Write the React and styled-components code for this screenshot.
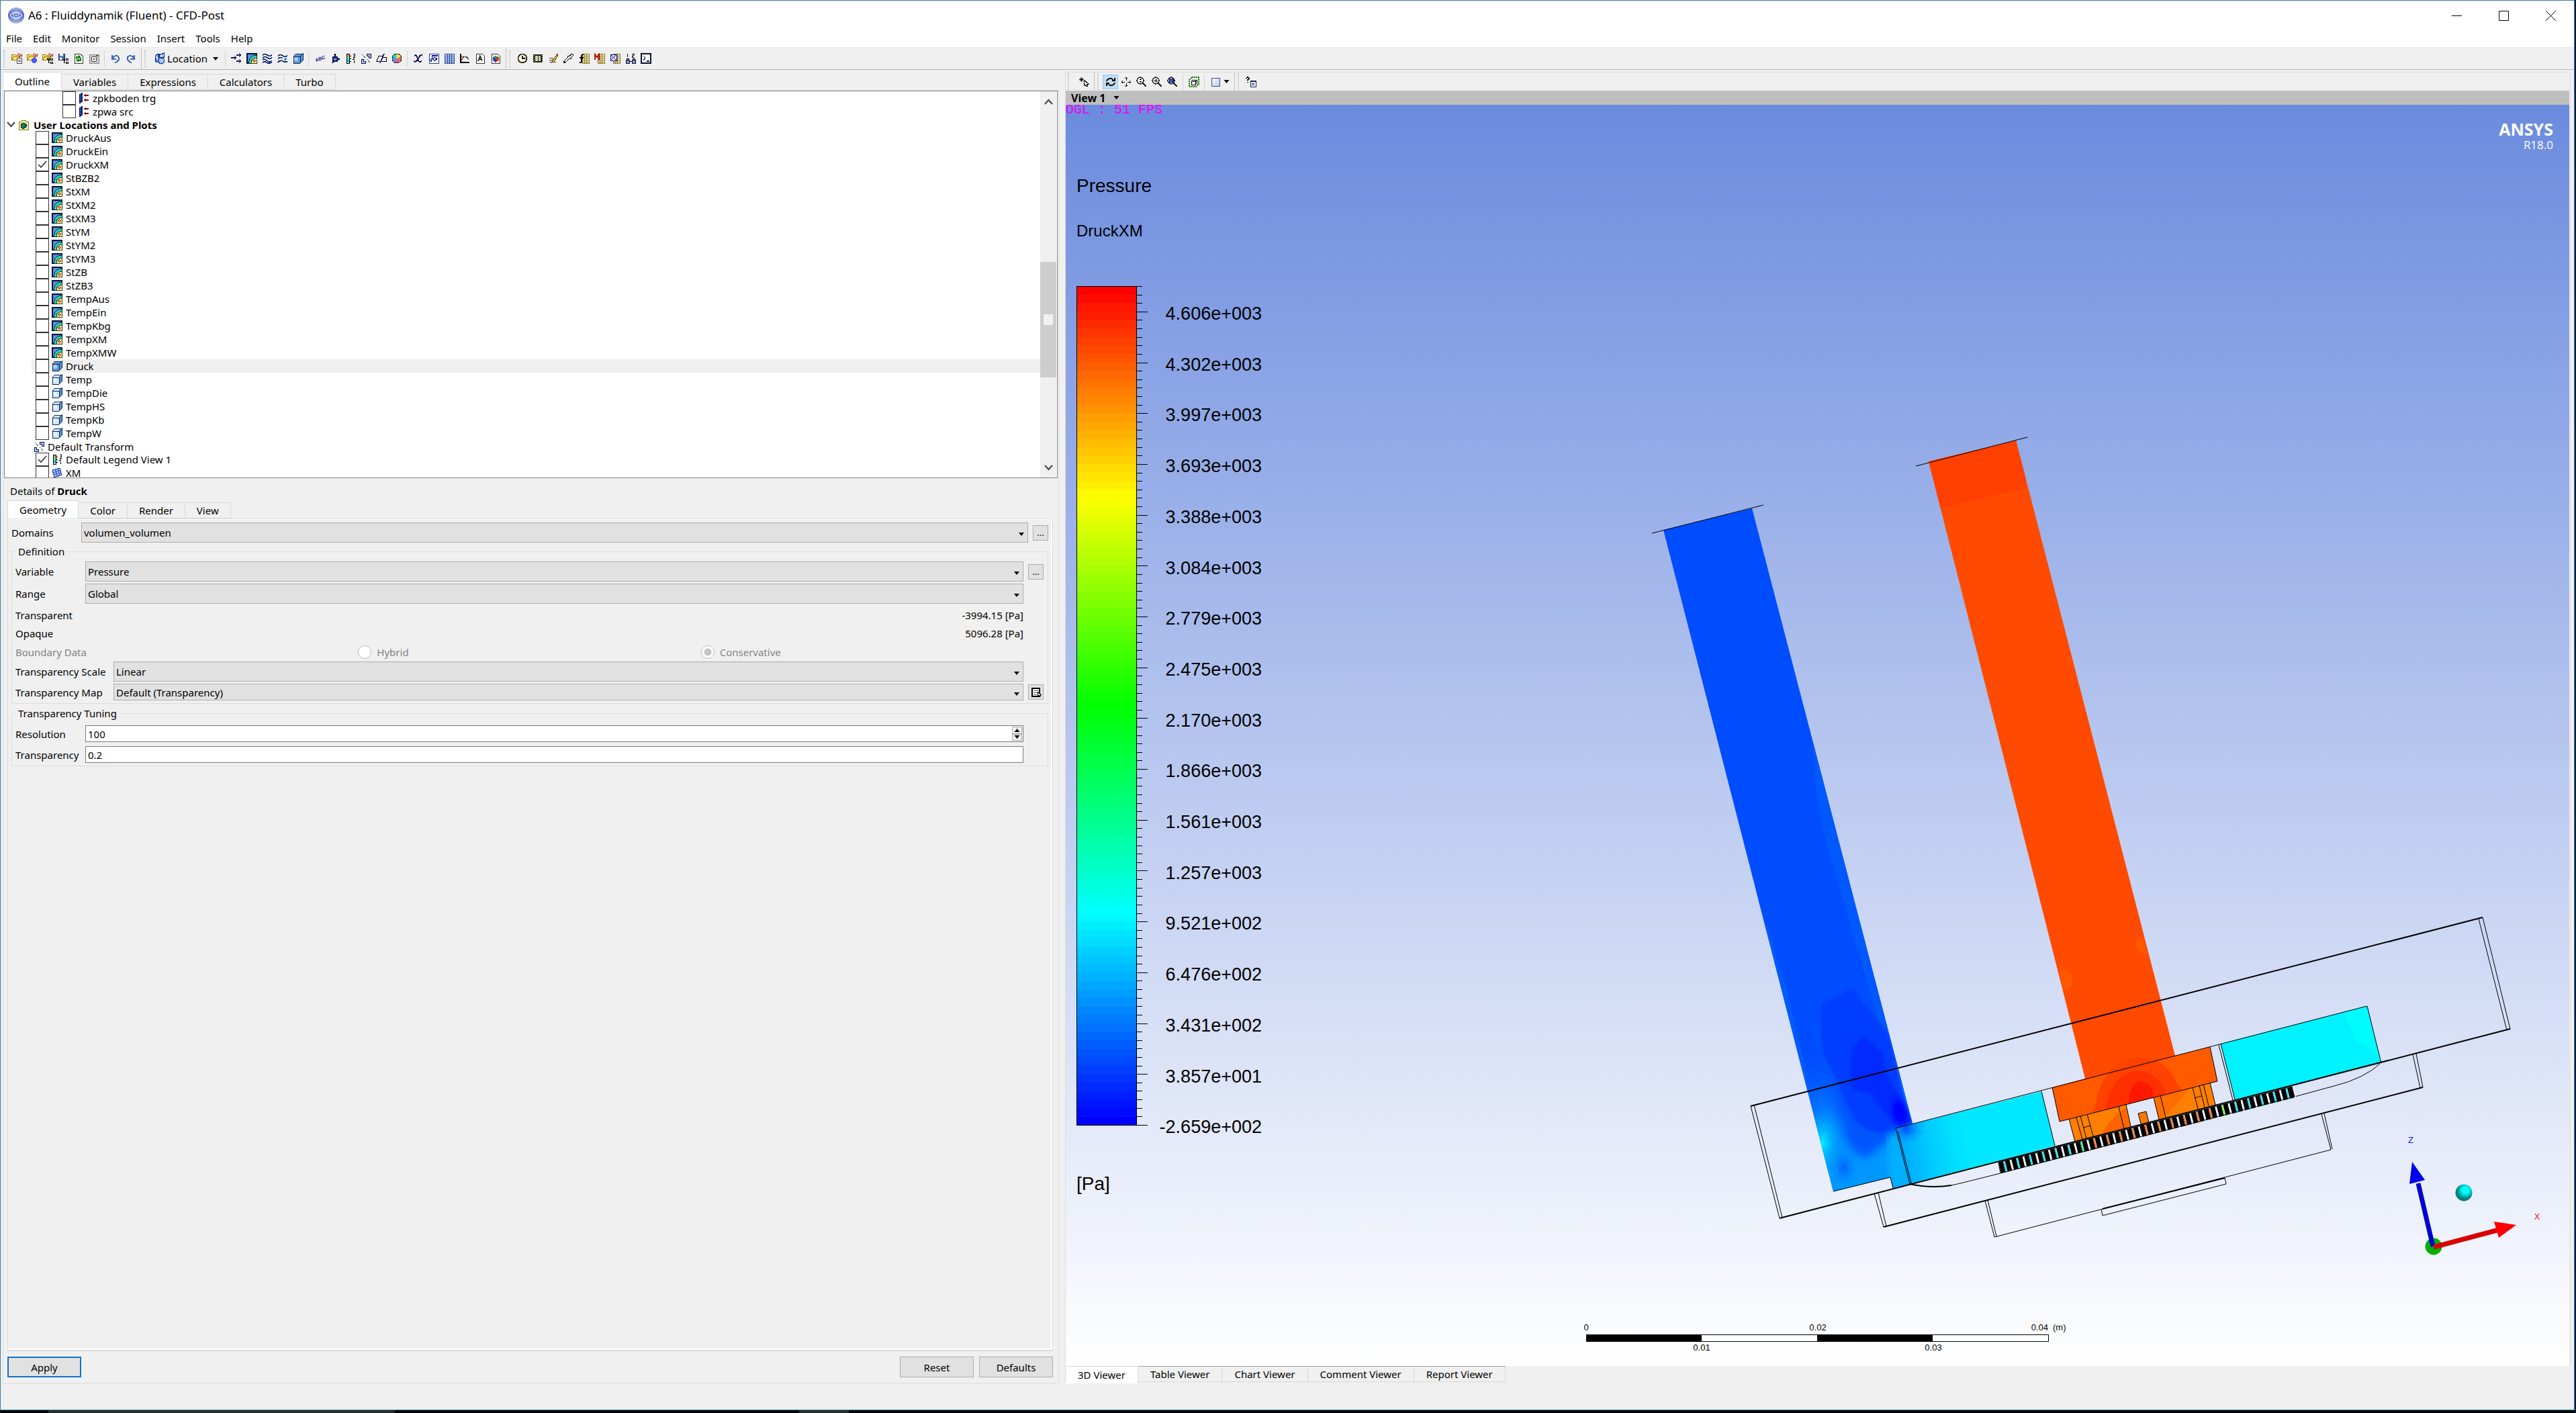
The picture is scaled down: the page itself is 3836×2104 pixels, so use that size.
import React from 'react'
import styled, { createGlobalStyle } from 'styled-components'

const GlobalStyle = createGlobalStyle`
  * { box-sizing: border-box; }
  body {
    margin: 0;
    background: #000;
    color: #000;
    font-family: "Noto Sans", "Open Sans", sans-serif;
    font-size: 15px;
    line-height: 20px;
  }
  button, input, select { font: inherit; color: inherit; }
  svg { display: block; }
`;

/* ---------- window ---------- */

const Desktop = styled.div`
  min-height: 100vh;
  display: flex;
  flex-direction: column;
  background: #0b1c33;
  padding-right: 2px;
`;

const Window = styled.div`
  flex: 1;
  display: flex;
  flex-direction: column;
  background: #f0f0f0;
  border: 1px solid #3c78a8;
  border-bottom-color: #4a7c94;
`;

const TitleBar = styled.header`
  display: flex;
  align-items: center;
  height: 44px;
  padding-left: 11px;
  background: #fff;
`;

const Title = styled.h1`
  flex: 1;
  margin: 0 0 0 6px;
  font-size: 17px;
  font-weight: 400;
`;

const WindowButton = styled.button`
  width: 70px;
  height: 42px;
  display: flex;
  align-items: center;
  justify-content: center;
  border: 0;
  padding: 0;
  background: none;
`;

const MenuBar = styled.nav`
  display: flex;
  gap: 16px;
  height: 26px;
  padding-left: 8px;
  background: #fff;
  border-bottom: 1px solid #e8e8e8;
`;

const MenuLink = styled.a`
  color: #000;
  text-decoration: none;
  line-height: 24px;
`;

/* ---------- toolbars ---------- */

const ToolBar = styled.div`
  display: flex;
  align-items: center;
  height: ${p => (p.$small ? 27 : 33)}px;
  padding-left: ${p => (p.$small ? 3 : 4)}px;
  border-bottom: ${p => (p.$small ? 0 : 1)}px solid #b4b4b4;
`;

const Grip = styled.span`
  width: 8px;
  height: 25px;
  border-left: 2px dotted #c4c4c4;
`;

const Spacer = styled.span`
  width: 4px;
`;

const Divider = styled.span`
  width: 1px;
  height: ${p => (p.$full ? '100%' : '24px')};
  margin: 0 4px;
  background: ${p => (p.$full ? '#c0c0c0' : '#d4d4d4')};
`;

const ToolButton = styled.button`
  width: ${p => p.$width || 23}px;
  height: 22px;
  display: flex;
  align-items: center;
  justify-content: center;
  gap: ${p => (p.$width > 100 ? 8 : 4)}px;
  padding: 0;
  border: 1px solid ${p => (p.$active ? '#90c8f6' : 'transparent')};
  background: ${p => (p.$active ? '#c0dcf3' : 'none')};
`;

const ToolText = styled.span`
  margin-left: -6px;
`;

/* ---------- panes ---------- */

const Body = styled.main`
  flex: 1;
  display: grid;
  grid-template-columns: 1573fr 2242fr;
  gap: 9px;
  padding: 3px 5px 0 3px;
`;

const Column = styled.section`
  display: flex;
  flex-direction: column;
  min-width: 0;
`;

const Tabs = styled.div`
  display: flex;
  align-items: ${p => (p.$bottom ? 'flex-start' : 'flex-end')};
  height: ${p => (p.$bottom ? 26 : 27)}px;
`;

const Tab = styled.button`
  height: ${p => (p.$active ? '100%' : '24px')};
  padding: 0 ${p => (p.$bottom ? 18 : 17)}px;
  border: 1px solid #d9d9d9;
  border-left-width: ${p => (p.$active ? 1 : 0)}px;
  border-top-color: ${p => (p.$bottom && !p.$active ? '#a0a0a0' : '#d9d9d9')};
  border-bottom-color: ${p => (p.$active ? '#fff' : '#d9d9d9')};
  background: ${p => (p.$active ? '#fff' : '#f0f0f0')};
  line-height: 20px;
`;

const Pane = styled.div`
  flex: 1;
  display: flex;
  flex-direction: column;
  padding: 0 1px 8px 1px;
  border: 1px solid #dcdcdc;
`;

const TreeBox = styled.div`
  display: flex;
  height: 577px;
  overflow: hidden;
  background: #fff;
  border: 1px solid #828282;
`;

const TreeList = styled.ul`
  flex: 1;
  margin: 0;
  padding: 0;
  list-style: none;
`;

const TreeRow = styled.li`
  display: flex;
  align-items: center;
  height: ${p => (p.$short ? 19 : 20)}px;
  margin-left: ${p => p.$indent}px;
  padding-left: ${p => (p.$short ? 3 : 6)}px;
  gap: 4px;
  background: ${p => (p.$selected ? '#efefef' : 'none')};
`;

const TreeLabel = styled.label`
  padding-left: ${p => (p.$bold ? 3 : 1)}px;
  white-space: nowrap;
  font-weight: ${p => (p.$bold ? 700 : 400)};
`;

const CheckWrap = styled.span`
  position: relative;
  width: 20px;
  height: 20px;
`;

const Check = styled.input`
  appearance: none;
  display: block;
  width: 20px;
  height: 20px;
  margin: 0;
  background: #fff;
  border: 1px solid #333;
`;

const CheckMark = styled.svg`
  position: absolute;
  left: 3px;
  top: 4px;
  pointer-events: none;
`;

const ScrollBar = styled.div`
  display: flex;
  flex-direction: column;
  align-items: center;
  width: 24px;
  margin-right: 1px;
  padding: 11px 0 10px;
  background: #f0f0f0;
`;

const Track = styled.div`
  flex: 1;
  align-self: stretch;
  display: grid;
  grid-template-rows: 234fr 171fr 130fr;
`;

const Thumb = styled.div`
  grid-row: 2;
  display: flex;
  align-items: center;
  justify-content: center;
  background: #cdcdcd;
`;

const ThumbGrip = styled.span`
  width: 14px;
  height: 16px;
  background: #f0f0f0;
`;

/* ---------- details form ---------- */

const DetailsTitle = styled.h2`
  margin: 0;
  padding: 9px 0 4px 9px;
  font-size: 15px;
  font-weight: 400;
`;

const DetailsArea = styled.div`
  flex: 1;
  display: flex;
  flex-direction: column;
  padding: 0 7px 0 5px;
`;

const DetailsPanel = styled.div`
  flex: 1;
  padding: 5px 6px 0 5px;
  border: 1px solid #dcdcdc;
  border-bottom: 2px solid #d9d9d9;
  box-shadow: inset -2px -2px 0 #fff, inset 0 1px 0 #fff;
`;

const Row = styled.div`
  display: grid;
  grid-template-columns: ${p => p.$label || 104}px 1fr 23px;
  align-items: center;
  margin-bottom: ${p => p.$gap || 3}px;
`;

const ValueRow = styled.div`
  display: flex;
  justify-content: space-between;
  align-items: center;
  height: 27px;
  padding-right: 30px;
`;

const RadioRow = styled.div`
  display: grid;
  grid-template-columns: 1fr 1fr 1fr;
  align-items: center;
  height: 29px;
  color: #838383;
`;

const RadioLabel = styled.label`
  display: flex;
  align-items: center;
  gap: 8px;
`;

const Radio = styled.input`
  appearance: none;
  width: 20px;
  height: 20px;
  margin: 0;
  border: 1px solid #bcbcbc;
  border-radius: 50%;
  background: #fff;
  &:checked {
    background: radial-gradient(circle, #c4c4c4 5px, #fff 6px);
  }
`;

const Group = styled.fieldset`
  min-width: 0;
  margin: ${p => (p.$last ? 4 : 2)}px 0 0;
  padding: ${p => (p.$last ? 8 : 5)}px 6px 1px 5px;
  border: 1px solid #dcdcdc;
`;

const Legend = styled.legend`
  padding: 0 4px;
`;

const SelectWrap = styled.div`
  position: relative;
  margin-right: 7px;
`;

const Select = styled.select`
  appearance: none;
  display: block;
  width: 100%;
  height: ${p => (p.$short ? 25 : 30)}px;
  padding: 0 3px;
  background: #e1e1e1;
  border: 1px solid #adadad;
  border-radius: 0;
`;

const SelectArrow = styled.svg`
  position: absolute;
  right: 6px;
  top: 50%;
  pointer-events: none;
`;

const TextInput = styled.input`
  display: block;
  width: 100%;
  height: 25px;
  padding: 0 3px;
  background: #fff;
  border: 1px solid #7a7a7a;
`;

const Spinner = styled.div`
  position: absolute;
  top: 2px;
  right: 2px;
  bottom: 2px;
  width: 15px;
  display: grid;
  grid-template-rows: 1fr 1fr;
`;

const SpinButton = styled.button`
  display: flex;
  align-items: center;
  justify-content: center;
  padding: 0;
  border: 1px solid #adadad;
  background: #f0f0f0;
`;

const SideButton = styled.button`
  width: 23px;
  height: 23px;
  display: flex;
  align-items: center;
  justify-content: center;
  padding: 0;
  border: 1px solid #adadad;
  background: #e1e1e1;
  font-size: 13px;
`;

const Actions = styled.div`
  display: flex;
  gap: 8px;
  padding-top: 8px;
`;

const ActionButton = styled.button`
  width: 110px;
  height: 31px;
  padding: 0;
  background: #e1e1e1;
  border: ${p => (p.$primary ? '2px solid #0f74c6' : '1px solid #adadad')};
  margin-right: ${p => (p.$primary ? 'auto' : '0')};
`;

/* ---------- viewer ---------- */

const ViewerFrame = styled.div`
  flex: 1;
  display: flex;
  flex-direction: column;
  padding-right: 1px;
  border: 1px solid #dcdcdc;
  border-bottom: 0;
`;

const ViewBar = styled.div`
  display: flex;
  align-items: center;
  gap: 12px;
  height: 21px;
  padding-left: 8px;
  background: #bfbfbf;
  font-size: 16px;
  font-weight: 700;
`;

const Canvas = styled.div`
  flex: 1;
  position: relative;
  background: linear-gradient(#6b8bde, #fff);
`;

const Scene = styled.svg`
  position: absolute;
  inset: 0;
  width: 100%;
  height: 100%;
  font-family: "Liberation Sans", Arial, sans-serif;
`;

const StatusBar = styled.footer`
  height: 39px;
  border-bottom: 1px solid #c6eef8;
`;

const TaskBar = styled.div`
  height: 4px;
  background: linear-gradient(90deg, #000 72px, #2b2b2b 72px, #2b2b2b 588px, #000 588px, #000 1190px, #2b2b2b 1190px, #2b2b2b 1264px, #000 1264px);
`;

/* ---------- icons, all on a 16px grid ---------- */

const folder = (
  <>
    <path d="M0 2h5l1 1h5v7H0z" fill="#ffe070" stroke="#a07800" />
    <path d="M1 10l3-5h9l-3 5z" fill="#fff08a" stroke="#a07800" />
  </>
);

const swoosh = <path d="M9 2q4-2 5 2M12 4h3V1" fill="none" stroke="#c00000" />;

const tree = (
  <path d="M9 9v5h2M9 11h2M12 8h3v2h-3zM12 13h3v2h-3zM7 7h3v2H7z" fill="#fff" stroke="#000" />
);

const grid = (
  <>
    <path d="M5 1h10v14H5z" fill="#fff3c0" stroke="#8a7a30" />
    <path d="M8 1v14M11 1v14M5 4h10M5 7h10M5 10h10M5 13h10" stroke="#8a7a30" fill="none" />
  </>
);

const lens = (
  <>
    <circle cx="6" cy="6" r="5" fill="#eef4ff" stroke="#222" strokeWidth="1.300" />
    <path d="M10 10l5 5" stroke="#222" strokeWidth="2" />
  </>
);

const cube = face => (
  <>
    <path d="M1 5l4-4h10v10l-4 4H1z" fill={face} stroke="#0a2a5a" />
    <path d="M11 5l4-4v10l-4 4z" fill="#5a90d0" stroke="#0a2a5a" />
    <path d="M1 5h10v10" fill="none" stroke="#0a2a5a" />
    <circle cx="5" cy="9" r="3" fill="#fff" opacity="0.500" />
  </>
);

const ICONS = {
  load: <>{folder}<path d="M8 7h7v8H8z" fill="#fff" stroke="#444" /><path d="M10 10h4M10 12h4" stroke="#444" />{swoosh}</>,
  loadState: <>{folder}<circle cx="11" cy="11" r="4" fill="#4a5cf0" />{swoosh}</>,
  loadTree: <>{folder}{tree}{swoosh}</>,
  saveTree: <><path d="M1 1h9v9H1z" fill="#5a78c8" stroke="#1a2a60" /><path d="M3 1h5v3H3zM3 7h5v3H3z" fill="#fff" />{tree}</>,
  refresh: <><path d="M2 1h8l4 3v11H2z" fill="#fff" stroke="#333" /><path d="M5 9V6h4M11 7v4H7M8 4l2 2-2 2M8 9l-2 2 2 2" fill="none" stroke="#008800" strokeWidth="1.500" /></>,
  camera: <><path d="M1 2h14v13H1z" fill="#c8c8c8" stroke="#888" /><circle cx="8" cy="9" r="4" fill="#eee" stroke="#444" /><circle cx="8" cy="9" r="1.500" fill="#444" /><path d="M11 3h3v2h-3z" fill="#555" /></>,
  undo: <path d="M7 14q6-1 6-6 0-4-4-4-3 0-5 4M3 3v6h6" fill="none" stroke="#3568b8" strokeWidth="2" />,
  redo: <path d="M9 14q-6-1-6-6 0-4 4-4 3 0 5 4M13 3v6H7" fill="none" stroke="#3568b8" strokeWidth="2" />,
  location: <><path d="M2 4l4-2 1 9-4 2zM7 3l7-2v5l-6 2z" fill="#b8d0ff" stroke="#103a90" strokeWidth="1.300" /><circle cx="10" cy="11" r="4" fill="#a8c4ff" stroke="#103a90" strokeWidth="1.300" /></>,
  vector: <path d="M0 7h8M5 4l3 3-3 3M8 3h7M12 0l3 3-3 3M8 12h7M12 9l3 3-3 3" fill="none" stroke="#101060" strokeWidth="1.200" />,
  contour: <><path d="M1 1h14v14H1z" fill="#5a8fe0" stroke="#001030" strokeWidth="1.600" /><path d="M4 15q-1-11 11-12v12z" fill="#20d8c0" stroke="#003038" /><path d="M7 15q0-8 8-8v8z" fill="#f8f0a0" stroke="#304000" /><circle cx="11.500" cy="11.500" r="1.800" fill="#f8b0a0" stroke="#800000" /></>,
  stream: <path d="M1 3q4-3 7 0t7 0M1 7q4-3 7 0t7 0M1 10q3-2 6 1t8 1M1 14q3-2 6 0t8 0" fill="none" stroke="#102a70" strokeWidth="1.800" />,
  particle: <><path d="M1 4q4-3 7 0t7 0M1 8q4-3 7 0M1 14q3-4 7-2t7 1" fill="none" stroke="#102a70" strokeWidth="1.800" /><circle cx="12" cy="9" r="2" fill="#5a8fe0" /></>,
  volume: cube('#5c9ad8'),
  volumeLight: cube('#cfe4ff'),
  textTool: <text x="1" y="11" fontSize="7" fontWeight="700" fill="#101080" fontFamily="Liberation Sans" transform="rotate(-20 8 8)">ABC</text>,
  frame: <path d="M8 1v7M5 6h6v6H5zM11 9h4M8 12l-5 3M6 3l2-2 2 2M13 7l2 2-2 2" fill="#6f94e8" stroke="#101050" strokeWidth="1.200" />,
  legend: <><path d="M2 1h4v5H2z" fill="#ff9090" /><path d="M2 5h4v5H2z" fill="#70f070" /><path d="M2 9h4v5H2z" fill="#20c8f0" /><path d="M2 1h4v14H2zM6 4h3M6 8h3M6 12h3" fill="none" stroke="#000" /><path d="M12 1h2v3h-2M12 6h2v1l-2 2h2M13 11v4" fill="none" stroke="#000" /></>,
  transform: <><path d="M9 1h6v6h-3V4H9zM1 9h3v3h3v3H1z" fill="#b0c4ff" stroke="#101050" /><path d="M2 2l5 5M9 9l5 5" stroke="#000" strokeDasharray="2 1" /></>,
  clip: <><path d="M4 4h7l-4 8H1zM9 6h6v6H8" fill="#f0f0f0" stroke="#000" /><path d="M12 1L6 15" stroke="#101080" strokeWidth="1.600" /></>,
  colors: <><path d="M8 8V1a7 7 0 0 1 6 4z" fill="#ffe060" /><path d="M8 8l6-3a7 7 0 0 1-2 8z" fill="#f07040" /><path d="M8 8l4 5a7 7 0 0 1-8 0z" fill="#e050c0" /><path d="M8 8l-4 5A7 7 0 0 1 2 5z" fill="#30a8f0" /><path d="M8 8L2 5a7 7 0 0 1 6-4z" fill="#50d890" /><circle cx="8" cy="8" r="7" fill="none" stroke="#333" /></>,
  variable: <path d="M2 4q3-2 4 2l2 5q1 3 5 1M14 3q-3-1-5 3l-3 5q-2 3-5 1" fill="none" stroke="#101060" strokeWidth="2" />,
  expression: <><path d="M1 1h14v14H1z" fill="#fff" stroke="#2040a0" /><path d="M2 9l2 4 2-9h8M13 7q-3 5-5 4-2-2 0-4 3-1 5 4" fill="none" stroke="#101080" strokeWidth="1.200" /></>,
  table: <><path d="M1 1h14v14H1z" fill="#cfe0ff" stroke="#2a4a98" /><path d="M1 4h14M1 7h14M1 10h14M1 13h14M5 1v14M8 1v14M11 1v14" stroke="#2a4a98" /></>,
  chart: <><path d="M2 1v13h13" fill="none" stroke="#000" strokeWidth="1.400" /><path d="M3 11q5-10 11-3" fill="none" stroke="#d02020" strokeWidth="1.300" /><path d="M3 6q6-3 11 4" fill="none" stroke="#208030" strokeWidth="1.300" /></>,
  comment: <><path d="M2 1h9l3 3v11H2z" fill="#fff" stroke="#333" /><path d="M5 12l3-8 3 8M6 9h4" fill="none" stroke="#000" strokeWidth="1.300" /></>,
  figure: <><path d="M2 1h9l3 3v11H2z" fill="#fff" stroke="#333" /><path d="M4 6l4-2 5 2v5l-5 3-4-3z" fill="#20a040" /><path d="M8 8l5-2v5l-5 3z" fill="#d03020" /><path d="M4 6l4 2v6l-4-3z" fill="#2040d0" /></>,
  clock: <><circle cx="8" cy="8" r="6.500" fill="#fffbe0" stroke="#2a2a10" strokeWidth="1.800" /><path d="M8 4v4h4" fill="none" stroke="#000" strokeWidth="1.200" /></>,
  film: <><path d="M1 2h14v12H1z" fill="#202010" /><path d="M4 4h8v8H4z" fill="#c8d8b0" /><path d="M2 3v11M14 3v11" stroke="#fff" strokeDasharray="1 2" /><path d="M8 2v12" stroke="#202010" /></>,
  edit: <><path d="M2 13h10M2 10h8M2 7h6" stroke="#444" /><path d="M14 1L7 11l-1 3 3-1 6-10z" fill="#f0c830" stroke="#604800" /></>,
  probe: <path d="M13 1l2 2-4 4 1 1-1 1-2-1-6 6H1v-2l6-6-1-1 1-1 1 1z" fill="#fff" stroke="#000" strokeWidth="1.300" />,
  fx: <>{grid}<path d="M7 2Q4 1 4 6v7q-1 2-3 1M1 7h6" fill="none" stroke="#000" strokeWidth="1.600" /></>,
  macro: <>{grid}<path d="M1 10V2l3 4 3-4v8" fill="none" stroke="#c01010" strokeWidth="1.800" /></>,
  mesh: <>{grid}<path d="M1 2h9v9H1zM1 2l9 9M10 2l-9 9" fill="#e0e8ff" stroke="#101090" /></>,
  compare: <><path d="M3 1v5M10 1h3v2l-3 2v1h3" fill="none" stroke="#000" /><path d="M1 10h5v5H1zM10 10h5v5h-5zM6 12h4M2 10V8h3v2M11 10V8h3v2" fill="#8090c8" stroke="#101030" /></>,
  command: <><path d="M1 1h14v14H1z" fill="#fff" stroke="#101030" strokeWidth="1.300" /><path d="M4 4l3 3-3 4M9 12h4" fill="none" stroke="#101060" strokeWidth="1.300" /></>,
  pick: <><path d="M4 1v7M1 4h7M2 2l5 5M7 2L2 7" stroke="#000" /><path d="M8 5v9l2-2 2 3 2-1-2-3h3z" fill="#fff" stroke="#000" /></>,
  rotate: <path d="M2 7q2-5 7-4l3 2M14 2v4h-4M14 9q-2 5-7 4l-3-2M2 14v-4h4" fill="none" stroke="#000" strokeWidth="1.800" />,
  move: <path d="M8 1v5M8 10v5M1 8h5M10 8h5M6 3l2-2 2 2M6 13l2 2 2-2M3 6L1 8l2 2M13 6l2 2-2 2" fill="none" stroke="#000" />,
  zoom: <>{lens}<path d="M4 5l2-2 2 2zM4 7l2 2 2-2z" /></>,
  zoomBox: <>{lens}<path d="M3 6h6M6 3v6" stroke="#000" /></>,
  fit: <>{lens}<path d="M3 4l3-1 3 1v4L6 9 3 8z" fill="#4050c0" stroke="#101050" /></>,
  highlight: <><path d="M1 5l4-4h10v10l-4 4H1z" fill="none" stroke="#008000" strokeWidth="1.800" strokeDasharray="2 1" /><path d="M4 7h6v5H4zM4 7l2-2h6l-2 2M12 5v5l-2 2" fill="#fff" stroke="#000" /></>,
  viewport: <><path d="M2 2h12v12H2z" fill="url(#vpFill)" stroke="#405070" /><defs><linearGradient id="vpFill" x2="1" y2="1"><stop stopColor="#fff" /><stop offset="1" stopColor="#b8c8f0" /></linearGradient></defs></>,
  help: <><path d="M1 3q0-2 2-2t2 2q0 1-2 2v1M3 8v1" fill="none" stroke="#000" strokeWidth="1.500" /><path d="M7 6h8v9H7z" fill="#fff" stroke="#102050" /><path d="M7 7h8" stroke="#102050" strokeWidth="2" /><path d="M9 10h4M9 12h4" stroke="#102050" /></>,
  boundary: <><path d="M2 3l3-2v12l-3 2z" fill="#3a70e0" stroke="#0a2060" strokeWidth="1.500" /><path d="M8 4h7M8 11h7" stroke="#801010" strokeWidth="1.500" /><path d="M8 4l3-3v6zM8 11l3-3v6z" fill="#801010" /></>,
  userFolder: <><path d="M1 3h4l1-2h5l1 2h3v12H1z" fill="#f4f0a0" stroke="#807820" /><path d="M4 7l4-2 4 2v4l-4 3-4-3z" fill="#109040" stroke="#002010" /><path d="M8 9l4-2v4l-4 3z" fill="#1a50a0" /></>,
  plane: <><path d="M1 4l11-3 3 10-11 4z" fill="#9ab8ff" stroke="#1a3a90" /><path d="M5 3l3 11M9 2l3 10M2 8l11-4M3 11l11-3" stroke="#3a60c8" /></>,
  editor: <><path d="M2 2h11v12H2z" fill="#fff" stroke="#000" strokeWidth="1.400" /><path d="M4 5h7M4 8h7M4 11h5" stroke="#555" /><path d="M10 7v7l2-2 2 2 1-1-2-2h2z" fill="#fff" stroke="#000" /></>,
}

const Icon = ({ name, size = 16 }) => (
  <svg width={size} height={size} viewBox="0 0 16 16" fill="#000" shapeRendering="crispEdges" aria-hidden="true">{ICONS[name]}</svg>
)

const Down = ({ as: Tag = 'svg', size = 8 }) => (
  <Tag width={size} height="5" viewBox="0 0 8 5" aria-hidden="true"><path d="M0 0h8L4 5z" /></Tag>
)

const Up = () => (
  <svg width="9" height="5" viewBox="0 0 8 5" aria-hidden="true"><path d="M0 5h8L4 0z" /></svg>
)

const Chevron = ({ up }) => (
  <svg width="13" height="9" viewBox="0 0 13 9" aria-hidden="true">
    <path d={up ? 'M1 8l5.500-6L12 8' : 'M1 1l5.500 6L12 1'} fill="none" stroke="#505050" strokeWidth="2.400" />
  </svg>
)

/* ---------- data ---------- */

const menus = ['File', 'Edit', 'Monitor', 'Session', 'Insert', 'Tools', 'Help']

const mainTools = [
  'grip', 'load', 'loadState', 'loadTree', 'saveTree', 'refresh', 'camera', '|', 'undo', 'redo', '||',
  'grip', 'LOCATION', '|', 'vector', 'contour', 'stream', 'particle', 'volume', '|',
  'textTool', 'frame', 'legend', 'transform', 'clip', 'colors', '|',
  'variable', 'expression', 'table', 'chart', 'comment', 'figure', '||',
  'grip', 'clock', 'film', 'edit', 'probe', 'fx', 'macro', 'mesh', 'compare', 'command',
]

const viewTools = [
  'grip', 'gap', 'pick', '||', 'grip', 'rotate', 'move', 'zoom', 'zoomBox', 'fit', '|',
  'highlight', '|', 'VIEWPORT', '||', 'grip', 'help',
]

const contours = [
  'DruckAus', 'DruckEin', 'DruckXM', 'StBZB2', 'StXM', 'StXM2', 'StXM3', 'StYM', 'StYM2',
  'StYM3', 'StZB', 'StZB3', 'TempAus', 'TempEin', 'TempKbg', 'TempXM', 'TempXMW',
]

const volumes = ['Druck', 'Temp', 'TempDie', 'TempHS', 'TempKb', 'TempW']

const treeItems = [
  { name: 'zpkboden trg', icon: 'boundary', indent: 80 },
  { name: 'zpwa src', icon: 'boundary', indent: 80 },
  { name: 'User Locations and Plots', icon: 'userFolder', root: true },
  ...contours.map(name => ({ name, icon: 'contour', indent: 40, checked: name === 'DruckXM' })),
  ...volumes.map(name => ({ name, icon: name === 'Druck' ? 'volume' : 'volumeLight', indent: 40, selected: name === 'Druck' })),
  { name: 'Default Transform', icon: 'transform', plain: true },
  { name: 'Default Legend View 1', icon: 'legend', indent: 40, checked: true },
  { name: 'XM', icon: 'plane', indent: 40 },
]

const levels = [
  '4.606e+003', '4.302e+003', '3.997e+003', '3.693e+003', '3.388e+003', '3.084e+003',
  '2.779e+003', '2.475e+003', '2.170e+003', '1.866e+003', '1.561e+003', '1.257e+003',
  '9.521e+002', '6.476e+002', '3.431e+002', '3.857e+001', '-2.659e+002',
]

/* ---------- parts ---------- */

const Tools = ({ items, small }) => (
  <ToolBar $small={small} role="toolbar">
    {items.map((item, i) => {
      if (item === 'grip') return <Grip key={i} />
      if (item === 'gap') return <Spacer key={i} />
      if (item === '|') return <Divider key={i} />
      if (item === '||') return <Divider key={i} $full />
      if (item === 'LOCATION') {
        return <ToolButton key={i} $width={108}><Icon name="location" size={18} /><ToolText>Location</ToolText><Down /></ToolButton>
      }
      if (item === 'VIEWPORT') {
        return <ToolButton key={i} $width={36} aria-label="viewport"><Icon name="viewport" /><Down size={9} /></ToolButton>
      }
      return <ToolButton key={i} aria-label={item} $active={item === 'rotate'}><Icon name={item} /></ToolButton>
    })}
  </ToolBar>
)

const TabStrip = ({ names, bottom }) => (
  <Tabs role="tablist" $bottom={bottom}>
    {names.map((name, i) => (
      <Tab key={name} role="tab" $active={i === 0} $bottom={bottom}>{name}</Tab>
    ))}
  </Tabs>
)

const TreeItem = ({ item }) => {
  if (item.root) {
    return (
      <TreeRow $short $indent={0}>
        <Chevron />
        <Icon name={item.icon} />
        <TreeLabel as="span" $bold>{item.name}</TreeLabel>
      </TreeRow>
    )
  }
  if (item.plain) {
    return (
      <TreeRow $short $indent={40}>
        <Icon name={item.icon} />
        <TreeLabel as="span">{item.name}</TreeLabel>
      </TreeRow>
    )
  }
  const id = 'tree-' + item.name.replace(/ /g, '-')
  return (
    <TreeRow $indent={item.indent} $selected={item.selected}>
      <CheckWrap>
        <Check type="checkbox" id={id} defaultChecked={item.checked} />
        {item.checked && (
          <CheckMark width="14" height="12" viewBox="0 0 14 12"><path d="M1 6l4 4 8-9" fill="none" stroke="#333" strokeWidth="1.600" /></CheckMark>
        )}
      </CheckWrap>
      <Icon name={item.icon} />
      <TreeLabel htmlFor={id}>{item.name}</TreeLabel>
    </TreeRow>
  )
}

const SelectRow = ({ id, label, value, width, short, side }) => (
  <Row $label={width}>
    <label htmlFor={id}>{label}</label>
    <SelectWrap>
      <Select id={id} $short={short} defaultValue={value}><option>{value}</option></Select>
      <Down as={SelectArrow} />
    </SelectWrap>
    {side}
  </Row>
)

const Details = () => (
  <DetailsArea>
    <TabStrip names={['Geometry', 'Color', 'Render', 'View']} />
    <DetailsPanel>
      <SelectRow id="domains" label="Domains" value="volumen_volumen" side={<SideButton>...</SideButton>} />
      <Group>
        <Legend>Definition</Legend>
        <SelectRow id="variable" label="Variable" value="Pressure" side={<SideButton>...</SideButton>} />
        <SelectRow id="range" label="Range" value="Global" />
        <ValueRow><span>Transparent</span><output>-3994.15 [Pa]</output></ValueRow>
        <ValueRow><span>Opaque</span><output>5096.28 [Pa]</output></ValueRow>
        <RadioRow role="radiogroup">
          <span>Boundary Data</span>
          <RadioLabel><Radio type="radio" name="boundary" disabled />Hybrid</RadioLabel>
          <RadioLabel><Radio type="radio" name="boundary" disabled defaultChecked />Conservative</RadioLabel>
        </RadioRow>
        <SelectRow id="scale" label="Transparency Scale" value="Linear" width={146} />
        <SelectRow
          id="map"
          label="Transparency Map"
          value="Default (Transparency)"
          width={146}
          short
          side={<SideButton aria-label="Edit map"><Icon name="editor" /></SideButton>}
        />
      </Group>
      <Group $last>
        <Legend>Transparency Tuning</Legend>
        <Row $gap={6}>
          <label htmlFor="resolution">Resolution</label>
          <SelectWrap>
            <TextInput id="resolution" defaultValue="100" />
            <Spinner>
              <SpinButton aria-label="Increase"><Up /></SpinButton>
              <SpinButton aria-label="Decrease"><Down size={9} /></SpinButton>
            </Spinner>
          </SelectWrap>
        </Row>
        <Row>
          <label htmlFor="transparency">Transparency</label>
          <SelectWrap><TextInput id="transparency" defaultValue="0.2" /></SelectWrap>
        </Row>
      </Group>
    </DetailsPanel>
    <Actions>
      <ActionButton $primary>Apply</ActionButton>
      <ActionButton>Reset</ActionButton>
      <ActionButton>Defaults</ActionButton>
    </Actions>
  </DetailsArea>
)

const BANDS = 99
const TOP = 426
const BAND = 12.615

const ColorLegend = () => (
  <g>
    <text x="1603" y="286" fontSize="28">Pressure</text>
    <text x="1603" y="352" fontSize="24">DruckXM</text>
    {Array.from({ length: BANDS }, (_, i) => (
      <rect key={i} x="1603" y={TOP + i * BAND} width="89" height={BAND + 0.5} fill={`hsl(${(i / (BANDS - 1)) * 240} 100% 50%)`} />
    ))}
    <rect x="1603.500" y="426.500" width="89" height="1249" fill="none" stroke="#000" />
    {Array.from({ length: BANDS + 1 }, (_, i) => {
      const y = Math.round(TOP + i * BAND) + 0.5
      return <line key={i} x1="1692" x2={i % 6 === 3 ? 1709 : 1701} y1={y} y2={y} stroke="#000" />
    })}
    {levels.map((level, i) => (
      <text key={level} x={1879} y={476 + Math.round(i * 75.7)} fontSize="27" textAnchor="end">{level}</text>
    ))}
    <text x="1603" y="1772" fontSize="28">[Pa]</text>
  </g>
)

// cooling fins run along the base line from (2976,1731) to (3413,1618)
const FINS = 46

const finColor = t => {
  if (t < 0.3 && t > 0.26) return '#20f080'
  if (t > 0.72 && t < 0.76) return '#80ff20'
  if (t > 0.28 && t < 0.72) return '#ff6a00'
  return '#00e8ff'
}

const Fins = () => (
  <g>
    {Array.from({ length: FINS }, (_, i) => {
      const t = i / (FINS - 1)
      const x = 2976 + t * 430
      const y = 1731 - t * 111
      return (
        <g key={i}>
          <path d={`M${x} ${y}l7-1.800 4 16-7 1.800z`} fill="#000" />
          <path d={`M${x + 8} ${y - 1}l4 15.500`} stroke="#fff" strokeWidth="2" />
          {i % 2 === 0 && <path d={`M${x + 8} ${y - 1}l4 15.500`} stroke={finColor(t)} strokeWidth="2" />}
        </g>
      )
    })}
    <path d="M2976 1731L3413 1618l4 15L2979 1747z" fill="none" stroke="#000" />
  </g>
)

const Model = () => (
  <g>
    <defs>
      <clipPath id="inletClip"><path d="M2477 789L2609 757L2848 1673L2823 1680L2844 1763L2819 1769L2815 1753L2730 1774z" /></clipPath>
      <clipPath id="hotClip"><path d="M2872 687L3002 656L3239 1572L3291 1559L3302 1610L3067 1670L3056 1619L3105 1606z" /></clipPath>
      <clipPath id="channelClip"><path d="M2823 1680L3040 1625L3060 1706L2844 1763z" /></clipPath>
      <linearGradient id="inletFade" gradientUnits="userSpaceOnUse" x1="2690" y1="1570" x2="2735" y2="1745">
        <stop offset="0" stopColor="#005cff" stopOpacity="0" />
        <stop offset="0.600" stopColor="#008cff" />
        <stop offset="1" stopColor="#0098ff" />
      </linearGradient>
      <linearGradient id="channel" gradientUnits="userSpaceOnUse" x1="2830" y1="1720" x2="2930" y2="1700">
        <stop offset="0" stopColor="#00a8ff" />
        <stop offset="0.400" stopColor="#00c8ff" />
        <stop offset="0.800" stopColor="#00e0ff" />
        <stop offset="1" stopColor="#00e8ff" />
      </linearGradient>
      <radialGradient id="corner"><stop stopColor="#0048ff" /><stop offset="1" stopColor="#00a0ff" stopOpacity="0" /></radialGradient>
      <radialGradient id="cyanGlow"><stop stopColor="#00f0ff" /><stop offset="1" stopColor="#0098ff" stopOpacity="0" /></radialGradient>
      <radialGradient id="blueSpot"><stop stopColor="#0060ff" /><stop offset="1" stopColor="#0090ff" stopOpacity="0" /></radialGradient>
      <radialGradient id="deepSpot"><stop offset="0.400" stopColor="#0004ff" /><stop offset="1" stopColor="#0028ff" stopOpacity="0" /></radialGradient>
      <radialGradient id="ball" cx="0.600" cy="0.350"><stop offset="0.400" stopColor="#00ffff" /><stop offset="1" stopColor="#008080" /></radialGradient>
      <filter id="soft"><feGaussianBlur stdDeviation="7" /></filter>
      <filter id="softer"><feGaussianBlur stdDeviation="2" /></filter>
    </defs>

    <g clipPath="url(#inletClip)">
      <path d="M2400 700H2900V1800H2400z" fill="#004cff" />
      <path d="M2619 1340L2661 1475L2688 1590L2700 1700L2640 1500L2560 1180z" fill="#005cff" />
      <path d="M2700 1105Q2700 1200 2736 1310L2800 1530L2840 1640L2761 1340z" fill="#0058ff" />
      <path d="M2660 1540H2900V1800H2660z" fill="url(#inletFade)" />
      <path d="M2700 1520L2725 1620L2750 1700Q2775 1740 2795 1710L2840 1680L2800 1560z" fill="#0054ff" filter="url(#soft)" />
      <path d="M2755 1472L2733 1485L2713 1494L2711 1526L2715 1569L2733 1604L2751 1647L2765 1672Q2800 1700 2845 1672L2812 1540L2790 1511L2777 1497L2761 1474z" fill="#003cff" filter="url(#softer)" />
      <path d="M2773 1544L2759 1561L2755 1590L2759 1622L2786 1629L2804 1654L2821 1672L2848 1672L2830 1636L2808 1597L2804 1569L2786 1551z" fill="#002cff" filter="url(#softer)" />
      <ellipse cx="2829" cy="1657" rx="18" ry="32" fill="url(#deepSpot)" transform="rotate(-14 2829 1657)" />
      <ellipse cx="2714" cy="1702" rx="28" ry="52" fill="url(#cyanGlow)" />
      <ellipse cx="2746" cy="1738" rx="22" ry="30" fill="url(#blueSpot)" />
      <path d="M2812 1690L2850 1680V1775H2812z" fill="#00b0ff" filter="url(#soft)" />
    </g>
    <path d="M2823 1680L3040 1625L3060 1706L2844 1763z" fill="url(#channel)" />
    <ellipse cx="2838" cy="1680" rx="30" ry="26" fill="url(#corner)" clipPath="url(#channelClip)" />
    <path d="M3307 1554L3525 1498L3546 1583L3328 1637z" fill="#00f2ff" />
    <path d="M3490 1507L3525 1498L3546 1583L3528 1560L3508 1550z" fill="#00fcff" />

    <g clipPath="url(#hotClip)">
      <path d="M2860 650H3310V1680H2860z" fill="#ff4a00" />
      <path d="M2860 640H3020L3016 727L2887 757z" fill="#ff4000" />
      <path d="M3190 1395q-14 8-4 22l12 4zM3066 1440q20 4 20 20t-14 12z" fill="#ff5800" />
      <path d="M3050 1622L3300 1556L3310 1612L3060 1675z" fill="#ff5a00" />
      <path d="M3120 1650Q3128 1590 3170 1576Q3220 1568 3240 1610L3250 1626L3110 1662z" fill="#ff4200" />
      <path d="M3135 1652Q3145 1600 3180 1594Q3220 1598 3226 1632z" fill="#ff3000" />
      <path d="M3170 1645Q3170 1614 3188 1610Q3208 1614 3206 1634z" fill="#ff1800" />
    </g>

    <path d="M3081 1666L3166 1645L3173 1678L3090 1700z" fill="#ff8000" />
    <path d="M3130 1690Q3140 1665 3166 1650L3173 1678z" fill="#ff6400" />
    <path d="M3207 1634L3291 1612L3299 1645L3215 1667z" fill="#ff8000" />
    <path d="M3207 1634L3260 1620Q3240 1650 3215 1667z" fill="#ff6c00" />
    <path d="M3184 1658L3196 1655L3200 1672L3189 1676z" fill="#ff7800" />

    <g fill="none" stroke="#000">
      <path d="M2460 794L2626 752M2853 694L3019 651" />
      <path d="M2730 1774L2815 1753L2819 1769" />
      <path d="M2823 1680L3525 1498L3546 1583M2823 1680L2844 1763M2826 1684L2846 1762" />
      <path d="M3040 1625L3060 1706M3056 1619L3067 1670L3302 1610L3291 1559M3307 1554L3328 1637M3304 1556L3325 1638" />
      <path d="M3081 1666L3090 1700M3092 1664L3101 1697M3098 1662L3107 1695M3108 1659L3117 1692M3103 1679L3113 1676M3155 1648L3163 1681M3166 1645L3173 1677" />
      <path d="M3207 1634L3215 1667M3217 1631L3225 1664M3265 1619L3273 1651M3275 1616L3283 1649M3281 1614L3289 1647M3268 1635L3278 1632M3291 1612L3299 1645" />
      <path d="M3189 1677L3184 1658L3196 1655L3200 1672" />
      <path d="M2607 1647L2650 1814M2612 1645L2654 1813M3697 1366L3738 1532M3691 1368L3733 1534" />
      <path d="M2791 1777L2805 1827M2797 1776L2809 1826M3593 1570L3604 1620M3598 1569L3608 1619" />
      <path d="M2956 1788L2970 1842L3471 1712L3457 1659M2960 1787L2973 1841M3461 1658L3473 1711" />
      <path d="M3129 1801L3131 1810L3315 1763L3313 1754" />
      <path d="M3417 1633L3476 1617Q3520 1606 3544 1584" />
      <path d="M2906 1765Q2920 1762 2979 1747" />
      <path d="M2607 1647L3697 1366M2650 1814L3738 1532M2805 1827L3608 1619M3131 1800L3313 1754" strokeWidth="2" />
      <path d="M2844 1763Q2875 1770 2906 1765" strokeWidth="2" />
    </g>
    <Fins />
  </g>
)

const Triad = () => (
  <g>
    <circle cx="3624" cy="1856" r="12.500" fill="#00b000" />
    <path d="M3623 1856L3601 1762" stroke="#0000d0" strokeWidth="7" />
    <path d="M3592 1730L3611 1757L3588 1763z" fill="#0000f0" />
    <path d="M3624 1857L3718 1832" stroke="#d80000" strokeWidth="7" />
    <path d="M3747 1824L3714 1819L3721 1843z" fill="#ff0000" />
    <circle cx="3669" cy="1776" r="12.500" fill="url(#ball)" />
    <text x="3590" y="1702" fontSize="13" fill="#2020c0" textAnchor="middle">Z</text>
    <text x="3778" y="1816" fontSize="13" fill="#e02020" textAnchor="middle">X</text>
  </g>
)

const Ruler = () => (
  <g fontSize="13">
    <rect x="2362.500" y="1987.500" width="688" height="10" fill="#fff" stroke="#000" />
    <path d="M2362 1987h172v11h-172zM2706 1987h172v11h-172z" />
    <text x="2362" y="1981" textAnchor="middle">0</text>
    <text x="2707" y="1981" textAnchor="middle">0.02</text>
    <text x="3050" y="1981" textAnchor="end">0.04</text>
    <text x="3057" y="1981">(m)</text>
    <text x="2534" y="2011" textAnchor="middle">0.01</text>
    <text x="2879" y="2011" textAnchor="middle">0.03</text>
  </g>
)

const App = () => {
  return (
    <>
      <GlobalStyle />
      <Desktop>
        <Window>
          <TitleBar>
            <svg width="24" height="24" viewBox="0 0 24 24" aria-hidden="true">
              <defs><linearGradient id="logo" y2="1" x2="0"><stop stopColor="#a8b4e8" /><stop offset="0.500" stopColor="#4a60c0" /><stop offset="1" stopColor="#a8c0f0" /></linearGradient></defs>
              <circle cx="12" cy="12" r="12" fill="url(#logo)" />
              <path d="M3 12q9-10 18 0q-9 10-18 0z" fill="none" stroke="#e0e8ff" strokeWidth="1.300" />
              <circle cx="12" cy="12" r="4" fill="none" stroke="#e0e8ff" strokeWidth="1.300" />
              <circle cx="12" cy="12" r="1.500" fill="#e0e8ff" />
            </svg>
            <Title>A6 : Fluiddynamik (Fluent) - CFD-Post</Title>
            <WindowButton aria-label="Minimize"><svg width="15" height="15"><path d="M0 7.500h15" stroke="#000" /></svg></WindowButton>
            <WindowButton aria-label="Maximize"><svg width="15" height="15"><path d="M.5.5h14v14H.5z" fill="none" stroke="#000" /></svg></WindowButton>
            <WindowButton aria-label="Close"><svg width="15" height="15"><path d="M0 0l15 15M15 0L0 15" stroke="#000" /></svg></WindowButton>
          </TitleBar>
          <MenuBar>
            {menus.map(name => <MenuLink key={name} href="#">{name}</MenuLink>)}
          </MenuBar>
          <Tools items={mainTools} />

          <Body>
            <Column>
              <TabStrip names={['Outline', 'Variables', 'Expressions', 'Calculators', 'Turbo']} />
              <Pane>
                <TreeBox>
                  <TreeList>
                    {treeItems.map(item => <TreeItem key={item.name} item={item} />)}
                  </TreeList>
                  <ScrollBar>
                    <Chevron up />
                    <Track><Thumb><ThumbGrip /></Thumb></Track>
                    <Chevron />
                  </ScrollBar>
                </TreeBox>
                <DetailsTitle>Details of <b>Druck</b></DetailsTitle>
                <Details />
              </Pane>
            </Column>

            <Column>
              <ViewerFrame>
                <Tools items={viewTools} small />
                <ViewBar>View 1 <Down size={9} /></ViewBar>
                <Canvas>
                  <Scene viewBox="1587 156 2239 1878" preserveAspectRatio="xMinYMin meet">
                    <text x="1587" y="169" fontSize="20" fill="#f000f0" fontFamily="Liberation Mono">OGL : 51 FPS</text>
                    <text x="3802" y="202" fontSize="25" fontWeight="700" fill="#fff" fontFamily="Open Sans" textAnchor="end">ANSYS</text>
                    <text x="3802" y="222" fontSize="17" fill="#fff" fontFamily="Open Sans" textAnchor="end">R18.0</text>
                    <ColorLegend />
                    <Model />
                    <Triad />
                    <Ruler />
                  </Scene>
                </Canvas>
              </ViewerFrame>
              <TabStrip names={['3D Viewer', 'Table Viewer', 'Chart Viewer', 'Comment Viewer', 'Report Viewer']} bottom />
            </Column>
          </Body>
          <StatusBar />
        </Window>
        <TaskBar />
      </Desktop>
    </>
  )
}

export default App
